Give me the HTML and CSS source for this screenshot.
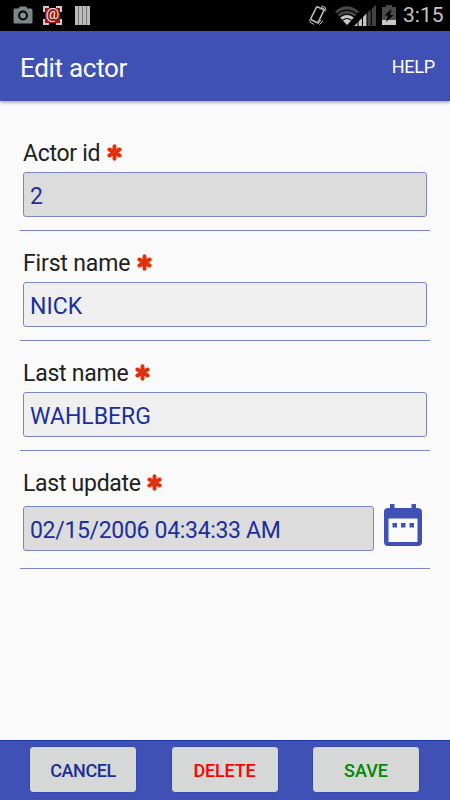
FILE: index.html
```html
<!DOCTYPE html>
<html lang="en">
<head>
<meta charset="utf-8">
<title>Edit actor</title>
<link rel="stylesheet" href="styles.css">
</head>
<body>
<svg class="defs" width="0" height="0" aria-hidden="true">
  <symbol id="required" viewBox="0 0 15 17">
    <path d="M7.500 2.200v12.600M2.400 5.500l10.200 6M2.400 11.500l10.200-6" stroke="#e2300c" stroke-width="4" stroke-linecap="round"/>
  </symbol>
</svg>
<div class="screen">
  <div class="status">
    <div class="notices">
      <svg width="20" height="18" viewBox="0 0 20 18"><path fill="#7b8889" d="M1.500 2.500h4L7 .5h6l1.500 2h3.500Q19.500 2.500 19.500 4v12q0 1.500-1.500 1.500H2Q.5 17.500.5 16V4q0-1.500 1-1.500z"/><circle cx="10" cy="9.500" r="3.900" fill="#829091" stroke="#000" stroke-width="2"/></svg>
      <div class="stamp">@</div>
      <svg width="15" height="19" viewBox="0 0 15 19"><path fill="#bcbcbc" d="M0 0h15v19H0z"/><path d="M3.500 0v19M7.500 0v19M11.500 0v19" stroke="#777" stroke-width="1"/></svg>
    </div>
    <div class="system">
      <svg class="rotate" width="18" height="22" viewBox="0 0 18 22" fill="none" stroke="#bdbdbd"><path d="M7.300 2.500Q7.800 1.600 8.800 2l5.300 2.600q.9.500.5 1.400L9.300 17q-.5 1-1.500.5l-5.500-2.700q-.8-.5-.4-1.400z" stroke-width="1.600"/><path d="M12.500.8l4 1.900.4 2.800M12 2.300l3.500 1.700.7 2.500M.6 14.500l.5 2.700 4 2.300M10.500 19.500l3.500-3.500M9 19l3-4" stroke-width="1"/></svg>
      <svg class="wifi" width="24" height="19" viewBox="0 0 24 19"><path fill="#484848" d="M0 5.500Q12-5 24 5.500L12 19z"/><path fill="#c8c8c8" d="M5.200 11.400q6.800-5 13.600 0L12 19z"/><path d="M2 8q10-7.700 20 0M4.500 11q7.500-6 15 0M7.500 14.300q4.500-3.600 9 0" fill="none" stroke="#000" stroke-width="1.100"/></svg>
      <svg class="signal" width="22" height="21" viewBox="0 0 22 21"><path fill="#424242" d="M13 8l9-8v21h-9z"/><path fill="#c8c8c8" d="M0 21L13 8v13z"/><path d="M4 21V15M8.500 21V10M13 21V7M17.300 21V3" stroke="#000" stroke-width="1.100"/></svg>
      <svg class="battery" width="14" height="20" viewBox="0 0 14 20"><path fill="#4a4a4a" d="M4 0h6v2h4v13H0V2h4z"/><path fill="#c8c8c8" d="M0 15h14v5H0z"/><path fill="#000" d="M9.500 4L2.500 10.500h3.500L4 17l7.500-7H8z"/></svg>
      <span class="clock">3:15</span>
    </div>
  </div>
  <header class="appbar"><h1>Edit actor</h1><span class="help">HELP</span></header>
  <main class="form">
    <section class="field"><div class="label"><span class="l-id">Actor id</span><svg><use href="#required"/></svg></div><div class="row"><div class="input locked">2</div></div></section>
    <section class="field"><div class="label"><span class="l-first">First name</span><svg><use href="#required"/></svg></div><div class="row"><div class="input">NICK</div></div></section>
    <section class="field"><div class="label"><span class="l-last">Last name</span><svg><use href="#required"/></svg></div><div class="row"><div class="input">WAHLBERG</div></div></section>
    <section class="field dated"><div class="label"><span class="l-update">Last update</span><svg><use href="#required"/></svg></div><div class="row"><div class="input locked">02/15/2006 04:34:33 AM</div>
      <svg class="calendar" width="38" height="42" viewBox="0 0 38 42"><path fill="#3f51b5" fill-rule="evenodd" d="M6 0h4.500v4h17V0H32v4h1.500Q38 4 38 8v30q0 4-4 4H4q-4 0-4-4V8q0-4 4-4h2zM4.500 14.500v23.500h29V14.500zM8.500 19H13v4.500H8.500zM17 19h4.500v4.500H17zM25.500 19H30v4.500h-4.500z"/></svg></div></section>
  </main>
  <footer class="actions"><button class="cancel">CANCEL</button><button class="delete">DELETE</button><button class="save">SAVE</button></footer>
</div>
</body>
</html>
```

FILE: styles.css
```css
* { box-sizing: border-box; }
body { margin: 0; font-family: Roboto, sans-serif; }
.defs { position: absolute; }
.screen { width: 450px; height: 800px; display: flex; flex-direction: column; background: #fafafa; overflow: hidden; }
.status { flex: 0 0 31px; background: #000; display: flex; justify-content: space-between; }
.notices { display: flex; align-items: flex-start; padding: 6px 0 0 13px; }
.stamp { width: 19px; height: 19px; margin: 0 13px 0 10px; border: 2px dashed #ccc; background: #9b1717; background-clip: padding-box; color: #eee; font: 15px/13px Roboto, sans-serif; display: flex; justify-content: center; }
.system { display: flex; align-items: flex-start; padding-right: 8px; }
.rotate { margin: 5px 8px 0 0; }
.wifi { margin-top: 6px; }
.signal { margin: 5px 6px 0 -5px; }
.battery { margin: 5px 7px 0 0; }
.clock { color: #c4c4c4; font-size: 21px; line-height: 31px; width: 39px; white-space: nowrap; }
.appbar { flex: 0 0 70px; background: #3f51b5; color: #fff; display: flex; align-items: center; justify-content: space-between; padding: 3px 15px 0 20px; box-shadow: 0 1px 4px rgba(0,0,0,.45); }
h1 { margin: 0; font-size: 26px; font-weight: 400; line-height: 34px; letter-spacing: -.3px; }
.help { font-size: 18px; letter-spacing: -.2px; padding-bottom: 2px; }
.form { flex: 1; padding: 20px 20px 0; }
.field { height: 110px; border-bottom: 1px solid #7986cb; padding: 16px 3px 0; }
.dated { height: 118px; }
.label { height: 35px; line-height: 33px; font-size: 23px; color: #212121; display: flex; white-space: nowrap; }
.l-id, .l-update { letter-spacing: -.28px; }
.l-first { letter-spacing: -.15px; }
.l-last { letter-spacing: -.25px; }
.label svg { width: 15px; height: 17px; margin: 7px 0 0 6.500px; }
.row { display: flex; }
.input { flex: 1; height: 45px; border: 1px solid #7986cb; border-radius: 3px; background: #efefef; color: #1a2f9f; font-size: 23px; line-height: 45px; padding: 1px 0 0 6px; white-space: nowrap; }
.locked { background: #dcdcdc; }
.dated .row { padding-top: 4px; }
.dated .input { letter-spacing: -.32px; }
.calendar { margin: -2px 5px 0 10px; }
.actions { flex: 0 0 60px; background: #3f51b5; border-top: 1px solid #1837ad; display: flex; gap: 33.500px; padding: 5px 29px 0; }
button { flex: 0 0 108px; height: 47px; border: 1px solid #3548ad; border-radius: 4px; background: #d6d7d7; font: 500 18px/44px Roboto, sans-serif; padding: 2px 0 0; }
.cancel { color: #1a2f91; letter-spacing: -.4px; }
.delete { color: #f00; letter-spacing: -.15px; }
.save { color: #008800; }
```
